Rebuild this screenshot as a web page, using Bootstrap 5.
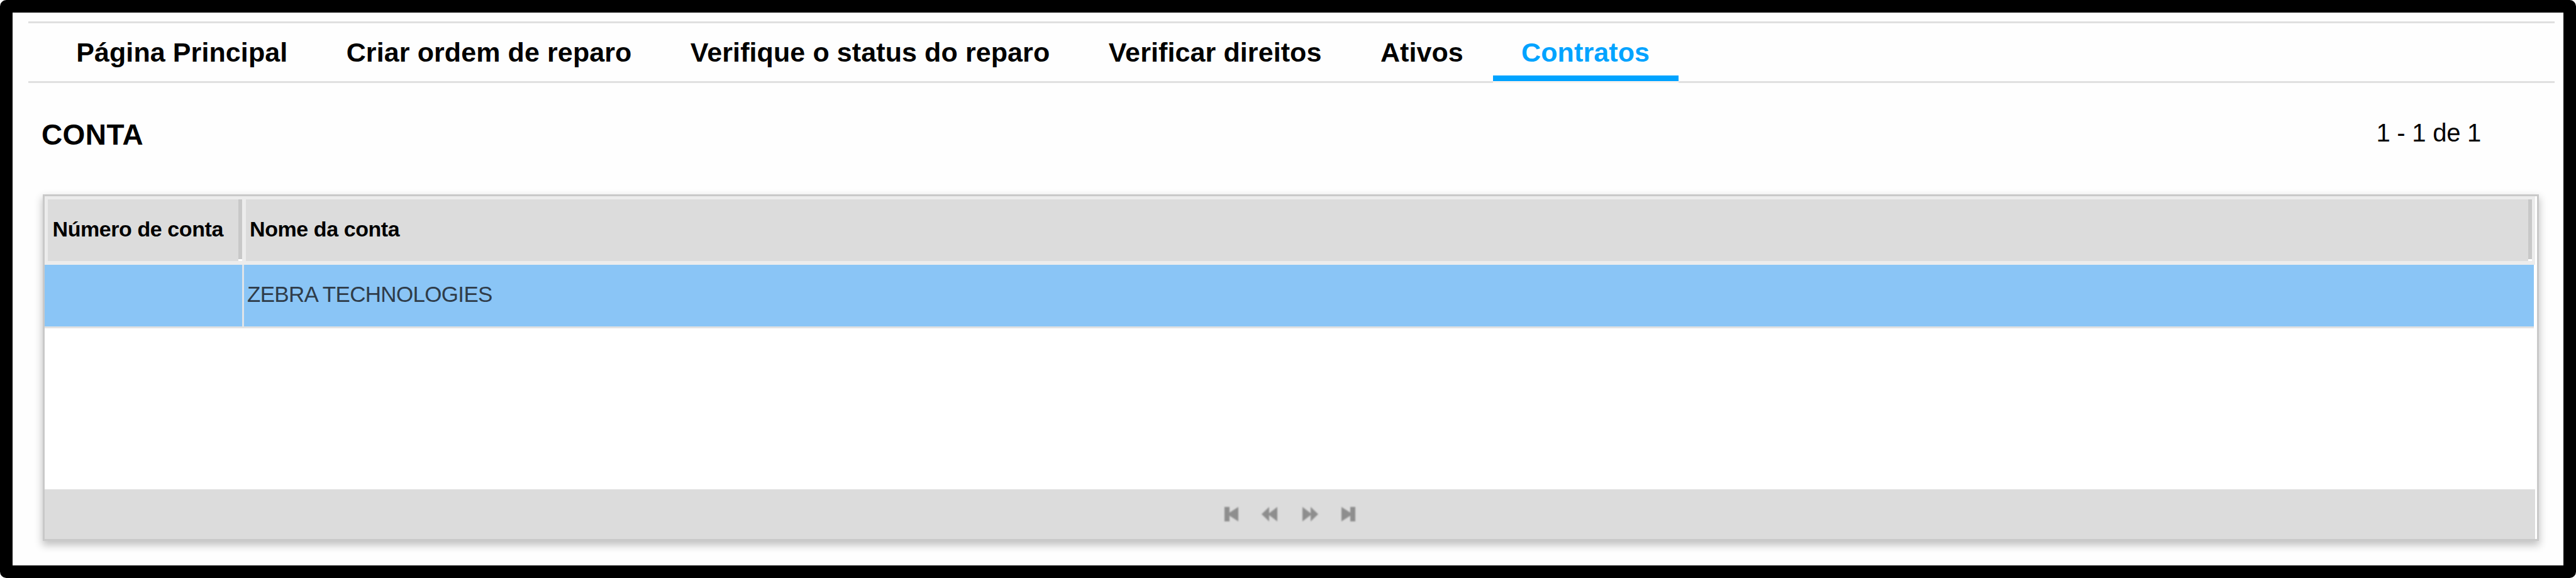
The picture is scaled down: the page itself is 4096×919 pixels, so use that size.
<!DOCTYPE html>
<html lang="pt-BR">
<head>
<meta charset="utf-8">
<title>Contratos</title>
<link rel="stylesheet" href="https://cdn.jsdelivr.net/npm/bootstrap@5.3.0/dist/css/bootstrap.min.css">
<style>
html,body{height:919px;margin:0;overflow:hidden;background:#fff}
body{font-family:"Liberation Sans",Arial,sans-serif;color:#000}
.frame{width:4096px;height:919px;border:20px solid #000;border-radius:10px;background:#fefefe}
.tabs{margin:14px 14px 0 25px;height:98px;border-top:3px solid #e0e0e0;border-bottom:3px solid #e0e0e0;padding-left:29.5px}
.tabs .nav-link{color:#000;font-size:43px;letter-spacing:.1px;line-height:50px;font-weight:700;padding:21px 46.7px 0;height:92px;border-radius:0;border-bottom:9px solid transparent;white-space:nowrap}
.tabs .nav-link.active{color:#00a3ff;border-bottom-color:#00a3ff;box-shadow:0 3px #fcf3ee;padding:21px 46px 0 45.5px}
.heading{height:177px;padding:0 131px 0 46px}
.heading h1{font-size:46px;line-height:54px;letter-spacing:.4px;font-weight:700;margin:55px 0 0}
.heading span{font-size:40px;line-height:46px;letter-spacing:-.25px;margin-top:56px}
.grid-panel{width:3969px;height:551px;margin-left:48px;border:3px solid #c9c9c9;background:#fff;box-shadow:0 6px 12px 1px rgba(0,0,0,.24)}
.grid-head{width:3960px;height:109px;padding:5px 5px 6px;gap:6px;background:#ececec}
.grid-head>div{height:98px;background:linear-gradient(#c8c8c8,#c8c8c8) right top/6px 95px no-repeat,linear-gradient(#fff,#fff) right bottom/6px 3px no-repeat,#dcdcdc;font-size:34px;line-height:40px;letter-spacing:-.42px;font-weight:700;padding:27px 6px 0}
.grid-row{width:3958px;height:101px;border-bottom:3px solid #e2e2e2;background:#8ac5f6;font-size:35px;line-height:40px;letter-spacing:-.68px;color:#2f3c49}
.grid-head>.col-num{width:309px;flex:none;padding-left:7.5px}
.grid-row .cell-num{width:317px;flex:none;border-right:3px solid #e0e4e8}
.grid-row .cell-name{padding:27px 5px 0}
.grid-foot{width:3960px;height:79px;background:#dcdcdc;gap:37px}
.grid-foot svg{display:block;fill:#8e8e8e;filter:blur(.8px);overflow:visible}
.pager-next{margin-left:3px}
</style>
</head>
<body>
<div class="frame overflow-hidden d-flex flex-column">
  <nav class="tabs nav flex-nowrap">
    <a class="nav-link">Página Principal</a>
    <a class="nav-link">Criar ordem de reparo</a>
    <a class="nav-link">Verifique o status do reparo</a>
    <a class="nav-link">Verificar direitos</a>
    <a class="nav-link">Ativos</a>
    <a class="nav-link active">Contratos</a>
  </nav>
  <header class="heading d-flex justify-content-between align-items-start">
    <h1>CONTA</h1>
    <span>1 - 1 de 1</span>
  </header>
  <section class="grid-panel d-flex flex-column">
    <div class="grid-head d-flex">
      <div class="col-num">Número de conta</div>
      <div class="flex-grow-1">Nome da conta</div>
    </div>
    <div class="grid-row d-flex">
      <div class="cell-num"></div>
      <div class="cell-name flex-grow-1">ZEBRA TECHNOLOGIES</div>
    </div>
    <div class="grid-foot mt-auto d-flex justify-content-center align-items-center">
      <svg width="22" height="23" viewBox="0 0 22 23"><path d="M0 0H8V9L22 0V23L8 14V23H0Z"/></svg>
      <svg width="25" height="23" viewBox="0 0 25 23"><path d="M0 11.5L12 0V10L25 0V23L12 13V23Z"/></svg>
      <svg class="pager-next" width="25" height="23" viewBox="0 0 25 23"><path d="M25 11.5L13 0V10L0 0V23L13 13V23Z"/></svg>
      <svg width="22" height="23" viewBox="0 0 22 23"><path d="M22 0H14V9L0 0V23L14 14V23H22Z"/></svg>
    </div>
  </section>
</div>
<script src="https://cdn.jsdelivr.net/npm/bootstrap@5.3.0/dist/js/bootstrap.bundle.min.js"></script>
</body>
</html>
